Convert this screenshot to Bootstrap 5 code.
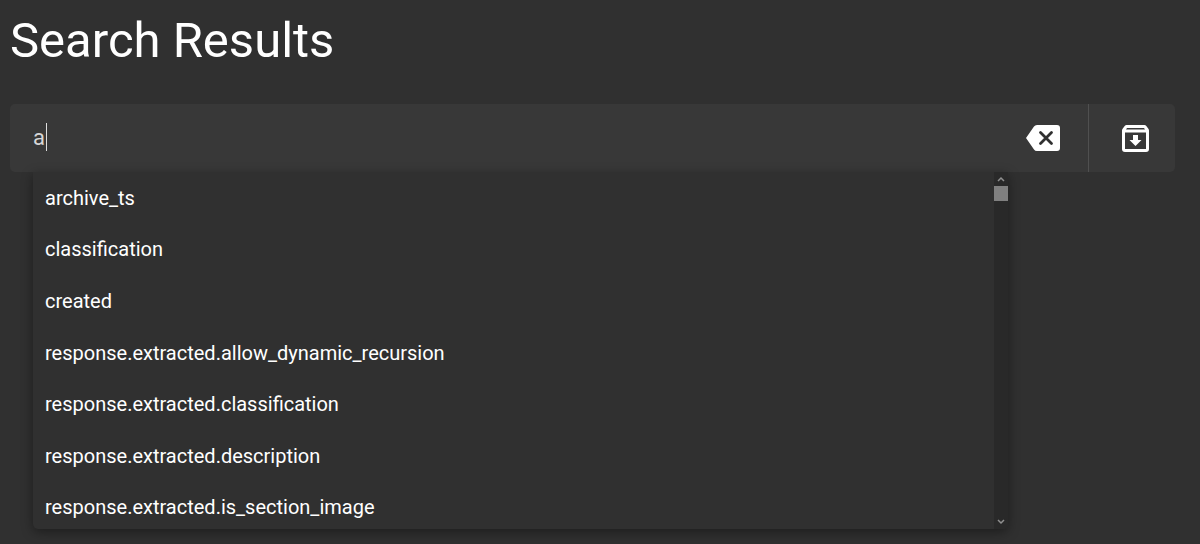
<!DOCTYPE html>
<html lang="en" data-bs-theme="dark">
<head>
<meta charset="utf-8">
<meta name="viewport" content="width=device-width, initial-scale=1">
<title>Search Results</title>
<link href="https://cdn.jsdelivr.net/npm/bootstrap@5.3.0/dist/css/bootstrap.min.css" rel="stylesheet">
<style>
  body { background: #303030; color: #fff; font-family: Roboto, "Liberation Sans", sans-serif; }
  main { padding: 13px 25px 15px 10px; }
  h1 { font-size: 49px; line-height: 56px; font-weight: 400; margin-bottom: 35px; }
  .search-bar { background: #383838; border-radius: 5px; height: 68px; }
  .query-box { height: 68px; }
  .query-box input, .query-box input:focus { background: transparent; color: #d6d6d6; font-size: 22px; line-height: 28px; padding: 0 23px; height: 66px; caret-color: transparent; box-shadow: none; }
  .caret { top: 19px; left: 36px; width: 1px; height: 28px; background: #ddd; }
  .icon-btn { color: #fff; border: 0; border-radius: 0; padding: 0; }
  .icon-btn svg { display: block; }
  .clear-btn { width: 90px; }
  .archive-btn { width: 87px; border-left: 1px solid #505050; padding-left: 7px; }
  .suggest { margin: 0 167px 0 23px; height: 357px; background: #303030; border-radius: 0 0 5px 5px; overflow: hidden; box-shadow: 0 3px 12px rgba(0,0,0,.4); }
  .suggest-list { height: 361px; min-width: 0; }
  .suggest-list button { background: none; border: 0; color: #fff; text-align: left; font-size: 20px; line-height: 24px; padding: 0 12px; }
  .suggest-list button:hover { background: #3c3c3c; }
  .scroll-track { width: 14px; background: #292929; }
  .scroll-thumb { height: 15px; background: #808080; }
  .scroll-arrow { height: 14px; color: #909090; }
</style>
</head>
<body>
<main>
  <h1>Search Results</h1>
  <form onsubmit="return false">
    <div class="search-bar d-flex">
      <div class="query-box flex-grow-1 position-relative">
        <input type="text" class="form-control border-0" value="a" aria-label="Search query" autocomplete="off">
        <span class="caret position-absolute"></span>
      </div>
      <button type="button" class="btn icon-btn clear-btn d-flex align-items-center justify-content-center" aria-label="Clear">
        <svg width="34" height="26" viewBox="0 0 34 26"><path fill="currentColor" d="M11 0H31Q34 0 34 3V23Q34 26 31 26H11Q9 26 8 24.500L0 13 8 1.500Q9 0 11 0Z"/><path d="M14.500 7.500 25.500 18.500M25.500 7.500 14.500 18.500" stroke="#303030" stroke-width="2.800" stroke-linecap="round"/></svg>
      </button>
      <button type="button" class="btn icon-btn archive-btn d-flex align-items-center justify-content-center" aria-label="Saved searches">
        <svg width="27" height="27" viewBox="0 0 27 27"><path fill="currentColor" fill-rule="evenodd" d="M4.500 0H22.500Q23.500 0 24.300 1L26.200 3.400Q27 4.300 27 5.500V24Q27 27 24 27H3Q0 27 0 24V5.500Q0 4.300.8 3.400L2.700 1Q3.500 0 4.500 0ZM5 3 4 4.500H23L22 3ZM3 7.500V24H24V7.500ZM11 10H16V15H19.500L13.500 21 7.500 15H11Z"/></svg>
      </button>
    </div>
    <div class="suggest d-flex">
      <div class="suggest-list d-flex flex-column flex-grow-1">
        <button type="button" class="flex-fill">archive_ts</button>
        <button type="button" class="flex-fill">classification</button>
        <button type="button" class="flex-fill">created</button>
        <button type="button" class="flex-fill">response.extracted.allow_dynamic_recursion</button>
        <button type="button" class="flex-fill">response.extracted.classification</button>
        <button type="button" class="flex-fill">response.extracted.description</button>
        <button type="button" class="flex-fill">response.extracted.is_section_image</button>
      </div>
      <div class="scroll-track d-flex flex-column" aria-hidden="true">
        <div class="scroll-arrow d-flex align-items-center justify-content-center"><svg width="8" height="6" viewBox="0 0 8 6"><path d="M1 5 4 2 7 5" fill="none" stroke="currentColor" stroke-width="1.500"/></svg></div>
        <div class="scroll-thumb"></div>
        <div class="scroll-arrow mt-auto d-flex align-items-center justify-content-center"><svg width="8" height="6" viewBox="0 0 8 6"><path d="M1 1 4 4 7 1" fill="none" stroke="currentColor" stroke-width="1.500"/></svg></div>
      </div>
    </div>
  </form>
</main>
<script src="https://cdn.jsdelivr.net/npm/bootstrap@5.3.0/dist/js/bootstrap.bundle.min.js"></script>
</body>
</html>
